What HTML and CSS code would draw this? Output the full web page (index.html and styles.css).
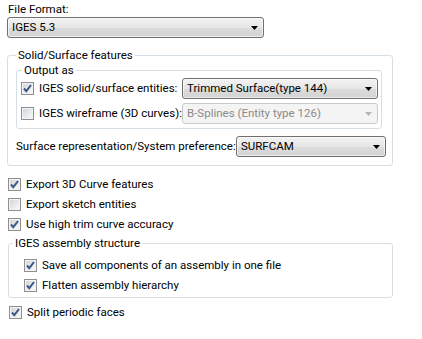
FILE: index.html
```html
<!DOCTYPE html>
<html lang="en">
  <head>
    <meta charset="UTF-8" />
    <title>IGES Export Options</title>
    <link rel="stylesheet" href="styles.css">
  </head>
  <body>
    <div class="page">
      <div class="field-label">File Format:</div>
      <div class="combo format">
        <span>IGES 5.3</span>
        <svg class="arrow" width="7" height="4" viewBox="0 0 7 4"><path d="M0 0h7L3.5 4z" /></svg>
      </div>

      <fieldset class="group solid">
        <legend>Solid/Surface features</legend>

        <fieldset class="group output">
          <legend>Output as</legend>
          <div class="output-row">
            <label class="check">
              <span class="box"><svg width="11" height="11" viewBox="0 0 11 11"><path d="M2 5.5l2.3 2.6L9 2" /></svg></span>
              <span>IGES solid/surface entities:</span>
            </label>
            <div class="combo wide">
              <span>Trimmed Surface(type 144)</span>
              <svg class="arrow" width="7" height="4" viewBox="0 0 7 4"><path d="M0 0h7L3.5 4z" /></svg>
            </div>
          </div>
          <div class="output-row">
            <label class="check">
              <span class="box"></span>
              <span>IGES wireframe (3D curves):</span>
            </label>
            <div class="combo wide disabled">
              <span>B-Splines (Entity type 126)</span>
              <svg class="arrow" width="7" height="4" viewBox="0 0 7 4"><path d="M0 0h7L3.5 4z" /></svg>
            </div>
          </div>
        </fieldset>

        <div class="surface-row">
          <span>Surface representation/System preference:</span>
          <div class="combo surf">
            <span>SURFCAM</span>
            <svg class="arrow" width="7" height="4" viewBox="0 0 7 4"><path d="M0 0h7L3.5 4z" /></svg>
          </div>
        </div>
      </fieldset>

      <div class="options">
        <label class="check">
          <span class="box"><svg width="11" height="11" viewBox="0 0 11 11"><path d="M2 5.5l2.3 2.6L9 2" /></svg></span>
          <span>Export 3D Curve features</span>
        </label>
        <label class="check">
          <span class="box"></span>
          <span>Export sketch entities</span>
        </label>
        <label class="check">
          <span class="box"><svg width="11" height="11" viewBox="0 0 11 11"><path d="M2 5.5l2.3 2.6L9 2" /></svg></span>
          <span>Use high trim curve accuracy</span>
        </label>
      </div>

      <fieldset class="group assembly">
        <legend>IGES assembly structure</legend>
        <label class="check">
          <span class="box"><svg width="11" height="11" viewBox="0 0 11 11"><path d="M2 5.5l2.3 2.6L9 2" /></svg></span>
          <span>Save all components of an assembly in one file</span>
        </label>
        <label class="check">
          <span class="box"><svg width="11" height="11" viewBox="0 0 11 11"><path d="M2 5.5l2.3 2.6L9 2" /></svg></span>
          <span>Flatten assembly hierarchy</span>
        </label>
      </fieldset>

      <div class="options split">
        <label class="check">
          <span class="box"><svg width="11" height="11" viewBox="0 0 11 11"><path d="M2 5.5l2.3 2.6L9 2" /></svg></span>
          <span>Split periodic faces</span>
        </label>
      </div>
    </div>
  </body>
</html>
```

FILE: styles.css
```css
body {
  margin: 0;
  background-color: #fff;
  color: #000;
  font-family: Roboto, "Liberation Sans", sans-serif;
  font-size: 11.5px;
  line-height: 15px;
  white-space: nowrap;
}

.page {
  padding-top: 2px;
}

.field-label {
  padding-left: 8px;
}

/* Combo boxes */
.combo {
  display: flex;
  align-items: center;
  box-sizing: border-box;
  height: 21px;
  padding: 0 5px 0 4px;
  border: 1px solid #707070;
  border-radius: 3px;
  background: linear-gradient(#f3f3f3, #e6e6e6 50%, #dcdcdc 51%, #d3d3d3);
  box-shadow: inset 0 0 0 1px rgba(255, 255, 255, 0.6);
}

.combo .arrow {
  margin-left: auto;
  fill: #000;
}

.combo.format {
  width: 257px;
  margin-left: 7px;
}

.combo.wide {
  width: 196px;
  flex: none;
}

.combo.surf {
  width: 150px;
  flex: none;
}

.combo.disabled {
  border-color: #c7cbcd;
  background: #f4f4f4;
  box-shadow: none;
  color: #8b8b8b;
}

.combo.disabled .arrow {
  fill: #b5b5b5;
}

/* Group boxes */
.group {
  margin: 0;
  min-width: 0;
  border: 1px solid #d5dfe5;
  border-radius: 3px;
}

.group legend {
  padding: 0 2px;
  line-height: 15px;
}

.group.solid {
  width: 386px;
  box-sizing: border-box;
  margin: 10px 0 0 7px;
  padding: 0 10px 8px 8px;
}

.group.output {
  padding: 0 0 4px 4px;
}

.group.output legend {
  margin-left: 1px;
}

.output-row {
  display: flex;
  align-items: center;
}

.output-row + .output-row {
  margin-top: 4px;
}

.output-row .check {
  flex: none;
  width: 161px;
  height: 21px;
}

.surface-row {
  display: flex;
  align-items: center;
  margin-top: 7px;
}

.surface-row .combo {
  margin-left: auto;
  margin-right: -4px;
}

.group.assembly {
  width: 385px;
  box-sizing: border-box;
  margin: 2px 0 0 8px;
  padding: 4px 0 2px 15px;
}

.group.assembly legend {
  margin-left: -11px;
}

/* Check boxes */
.options {
  padding-left: 8px;
  margin-top: 8px;
}

.options.split {
  margin-top: 4px;
  padding-left: 9px;
}

.check {
  display: flex;
  align-items: center;
  height: 20px;
  gap: 5px;
}

.box {
  display: flex;
  align-items: center;
  justify-content: center;
  flex: none;
  width: 13px;
  height: 13px;
  box-sizing: border-box;
  border: 1px solid #8e8f8f;
  background: linear-gradient(135deg, #cfd3d8, #f4f4f4 80%);
  box-shadow: inset 0 0 0 1px #f4f4f4;
}

.box svg path {
  fill: none;
  stroke: #3d5788;
  stroke-width: 2;
}
```
